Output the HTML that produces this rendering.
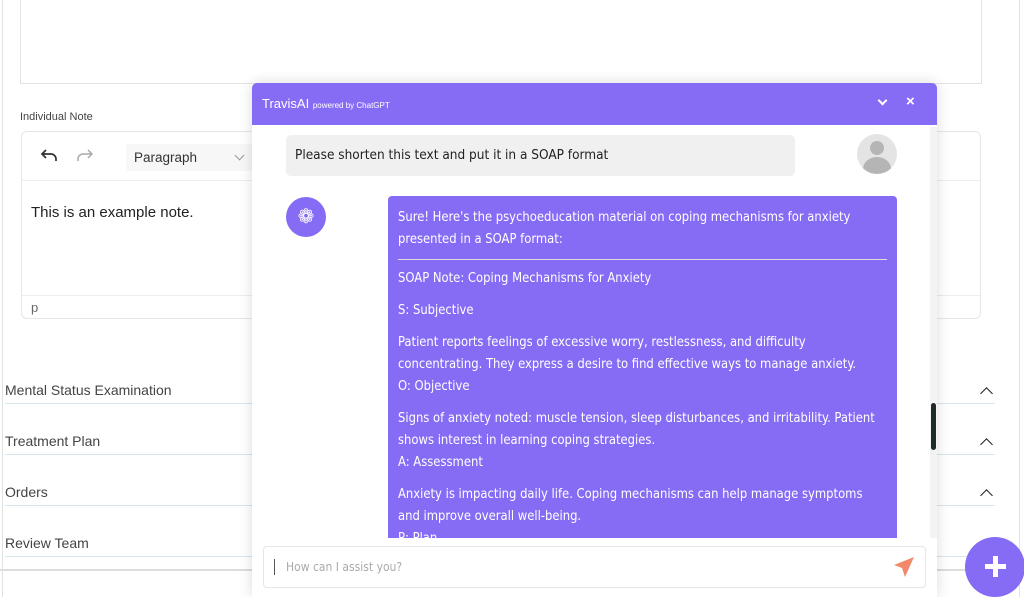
<!DOCTYPE html>
<html><head><style>
*{margin:0;padding:0;box-sizing:border-box}
body{width:1024px;height:597px;overflow:hidden;background:#fff;font-family:"Liberation Sans",sans-serif;position:relative;color:#333}
.a{position:absolute}
.row{position:absolute;left:5px;width:990px;border-bottom:1px solid #d6e6ee;font-size:14px;color:#444;height:22px}
.chev{position:absolute;right:4px;top:2px;width:9px;height:9px;border-left:1.6px solid #222;border-top:1.6px solid #222;transform:rotate(45deg)}
.bt p{margin:0}
.bt{font-family:"DejaVu Sans Condensed","Liberation Sans",sans-serif;font-size:12.9px;color:#fff;line-height:22px}
</style></head><body>
<div class="a" style="left:2px;top:0;width:1px;height:597px;background:#e2e2e2"></div>
<div class="a" style="left:1019px;top:0;width:1px;height:597px;background:#e2e2e2"></div>
<div class="a" style="left:20px;top:-2px;width:962px;height:86px;border:1px solid #e3e3e3"></div>
<div class="a" style="left:20px;top:111px;font-size:11px;color:#444">Individual Note</div>
<div class="a" style="left:21px;top:131px;width:960px;height:188px;border:1px solid #e6e6e6;border-radius:6px">
 <div class="a" style="left:0;top:48px;width:958px;height:1px;background:#eee"></div>
 <svg class="a" style="left:18px;top:16px" width="20" height="16" viewBox="0 0 20 16"><path d="M6 2L2 6l4 4M2 6h9a5 5 0 0 1 5 5v2" fill="none" stroke="#333" stroke-width="1.7"/></svg>
 <svg class="a" style="left:54px;top:16px" width="20" height="16" viewBox="0 0 20 16"><path d="M12 2l4 4-4 4M16 6H7a5 5 0 0 0-5 5v2" fill="none" stroke="#aaa" stroke-width="1.5"/></svg>
 <div class="a" style="left:104px;top:12px;width:128px;height:27px;background:#f7f7f7;font-size:13.5px;color:#333;padding:6px 8px">Paragraph</div>
 <div class="a" style="left:214px;top:20px;width:7px;height:7px;border-right:1.5px solid #999;border-bottom:1.5px solid #999;transform:rotate(45deg)"></div>
 <div class="a" style="left:9px;top:72px;font-size:15px;color:#222">This is an example note.</div>
 <div class="a" style="left:0;top:163px;width:958px;height:1px;background:#eee"></div>
 <div class="a" style="left:9px;top:168px;font-size:13px;color:#666">p</div>
</div>
<div class="row" style="top:382px">Mental Status Examination<div class="chev" style="top:7px"></div></div>
<div class="row" style="top:433px">Treatment Plan<div class="chev" style="top:7px"></div></div>
<div class="row" style="top:484px">Orders<div class="chev" style="top:7px"></div></div>
<div class="row" style="top:535px">Review Team</div>
<div class="a" style="left:0;top:569px;width:1020px;height:2px;background:#ddd"></div>

<div class="a" style="left:252px;top:83px;width:685px;height:514px;background:#fff;box-shadow:0 0 14px rgba(0,0,0,.15);border-radius:5px 5px 0 0;overflow:hidden">
 <div class="a" style="left:0;top:0;width:685px;height:42px;background:#866bf5;color:#fff">
  <div class="a" style="left:10px;top:13px;font-size:13px">TravisAI <span style="font-size:8px">powered by ChatGPT</span></div>
  <div class="a" style="left:627px;top:14px;width:7px;height:7px;border-right:2px solid #fff;border-bottom:2px solid #fff;transform:rotate(45deg)"></div>
  <div class="a" style="left:654px;top:10px;font-size:15px;font-weight:bold">×</div>
 </div>
 <div class="a" style="left:34px;top:52px;width:509px;height:41px;background:#f0f0f0;border-radius:5px;font-size:13.5px;color:#222;padding:12px 9px;font-family:'DejaVu Sans Condensed',sans-serif">Please shorten this text and put it in a SOAP format</div>
 <div class="a" style="left:605px;top:51px;width:40px;height:40px;border-radius:50%;background:#e4e4e4;overflow:hidden">
  <div class="a" style="left:13px;top:7px;width:14px;height:14px;border-radius:50%;background:#b5b5b5"></div>
  <div class="a" style="left:6px;top:23px;width:28px;height:24px;border-radius:50%;background:#b5b5b5"></div>
 </div>
 <div class="a" style="left:34px;top:114px;width:40px;height:40px;border-radius:50%;background:#866bf5;color:#fff;font-size:20px;text-align:center;line-height:40px">❁</div>
 <div class="a bt" style="left:136px;top:113px;width:509px;height:360px;background:#866bf5;border-radius:4px;padding:11px 10px">
  <p>Sure! Here's the psychoeducation material on coping mechanisms for anxiety presented in a SOAP format:</p>
  <div style="height:1px;background:#ddd;margin:8px 0 8px"></div>
  <p>SOAP Note: Coping Mechanisms for Anxiety</p>
  <p style="margin-top:10px">S: Subjective</p>
  <p style="margin-top:10px">Patient reports feelings of excessive worry, restlessness, and difficulty concentrating. They express a desire to find effective ways to manage anxiety.</p>
  <p>O: Objective</p>
  <p style="margin-top:10px">Signs of anxiety noted: muscle tension, sleep disturbances, and irritability. Patient shows interest in learning coping strategies.</p>
  <p>A: Assessment</p>
  <p style="margin-top:10px">Anxiety is impacting daily life. Coping mechanisms can help manage symptoms and improve overall well-being.</p>
  <p>P: Plan</p>
 </div>
 <div class="a" style="left:678px;top:44px;width:7px;height:416px;background:#f3f3f3"></div>
 <div class="a" style="left:679px;top:320px;width:5px;height:47px;background:#1f2a2a;border-radius:3px"></div>
 <div class="a" style="left:0;top:455px;width:685px;height:60px;background:#fff"></div>
 <div class="a" style="left:11px;top:463px;width:663px;height:42px;border:1px solid #e6e6e6;border-radius:4px;font-size:12px;color:#aaa;padding:13px 22px;font-family:'DejaVu Sans Condensed',sans-serif">How can I assist you?</div>
 <div class="a" style="left:22px;top:476px;width:1px;height:16px;background:#555"></div>
 <svg class="a" style="left:641px;top:473px" width="22" height="22" viewBox="0 0 22 22"><path d="M21 1L1 9l8 3 3 9z" fill="#f08a6a"/></svg>
</div>
<div class="a" style="left:965px;top:537px;width:60px;height:60px;border-radius:50%;background:#866bf5"></div>
<div class="a" style="left:985px;top:564px;width:21px;height:5px;background:#fff"></div>
<div class="a" style="left:993px;top:556px;width:5px;height:21px;background:#fff"></div>
</body></html>
